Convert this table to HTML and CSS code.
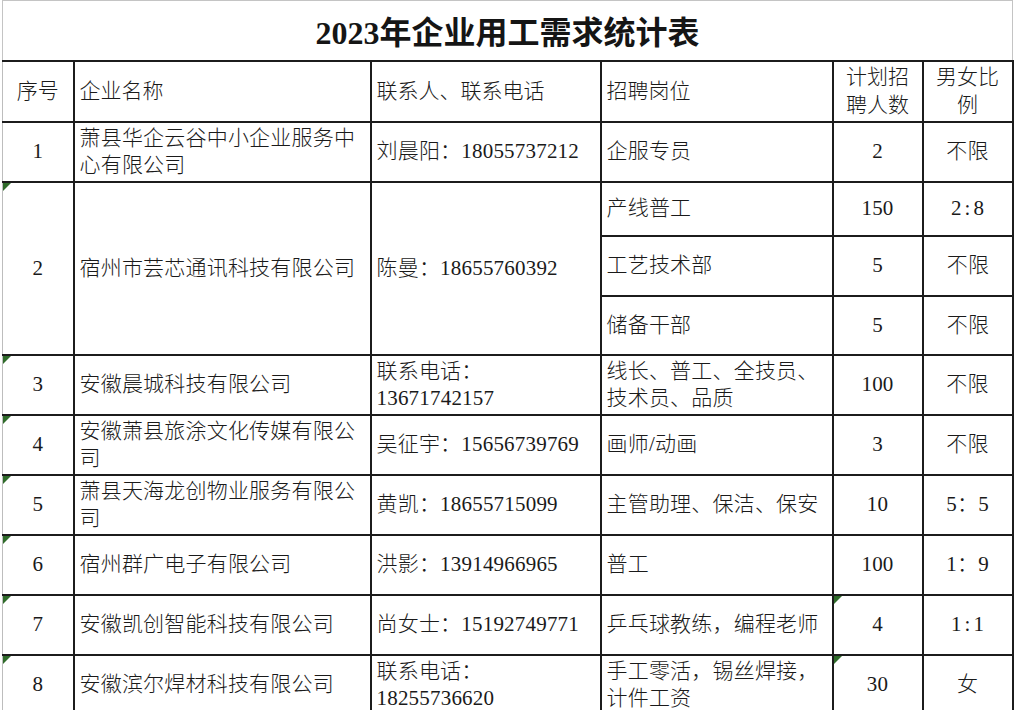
FILE: index.html
```html
<!DOCTYPE html>
<html lang="zh-CN">
<head>
<meta charset="utf-8">
<title>2023年企业用工需求统计表</title>
<link rel="stylesheet" href="styles.css">
</head>
<body>
<table class="sheet">
  <colgroup>
    <col class="c-no">
    <col class="c-name">
    <col class="c-contact">
    <col class="c-job">
    <col class="c-num">
    <col class="c-ratio">
  </colgroup>
  <thead>
    <tr class="r-title"><th colspan="6" class="title">2023年企业用工需求统计表</th></tr>
    <tr class="r-head">
      <th class="center">序号</th>
      <th class="left">企业名称</th>
      <th class="left">联系人、联系电话</th>
      <th class="left">招聘岗位</th>
      <th class="center narrow">计划招聘人数</th>
      <th class="center narrow">男女比例</th>
    </tr>
  </thead>
  <tbody>
    <tr class="r-std">
      <td class="center">1</td>
      <td class="left">萧县华企云谷中小企业服务中心有限公司</td>
      <td class="left">刘晨阳：18055737212</td>
      <td class="left">企服专员</td>
      <td class="center">2</td>
      <td class="center">不限</td>
    </tr>
    <tr class="r-a">
      <td class="center mark" rowspan="3">2</td>
      <td class="left" rowspan="3">宿州市芸芯通讯科技有限公司</td>
      <td class="left" rowspan="3">陈曼：18655760392</td>
      <td class="left">产线普工</td>
      <td class="center">150</td>
      <td class="center ratio">2:8</td>
    </tr>
    <tr class="r-b">
      <td class="left">工艺技术部</td>
      <td class="center">5</td>
      <td class="center">不限</td>
    </tr>
    <tr class="r-c">
      <td class="left">储备干部</td>
      <td class="center">5</td>
      <td class="center">不限</td>
    </tr>
    <tr class="r-std">
      <td class="center mark">3</td>
      <td class="left">安徽晨城科技有限公司</td>
      <td class="left">联系电话：<br>13671742157</td>
      <td class="left">线长、普工、全技员、技术员、品质</td>
      <td class="center">100</td>
      <td class="center">不限</td>
    </tr>
    <tr class="r-std">
      <td class="center mark">4</td>
      <td class="left">安徽萧县旅涂文化传媒有限公司</td>
      <td class="left">吴征宇：15656739769</td>
      <td class="left">画师/动画</td>
      <td class="center">3</td>
      <td class="center">不限</td>
    </tr>
    <tr class="r-std">
      <td class="center mark">5</td>
      <td class="left">萧县天海龙创物业服务有限公司</td>
      <td class="left">黄凯：18655715099</td>
      <td class="left">主管助理、保洁、保安</td>
      <td class="center">10</td>
      <td class="center">5：5</td>
    </tr>
    <tr class="r-std">
      <td class="center mark">6</td>
      <td class="left">宿州群广电子有限公司</td>
      <td class="left">洪影：13914966965</td>
      <td class="left">普工</td>
      <td class="center">100</td>
      <td class="center">1：9</td>
    </tr>
    <tr class="r-std">
      <td class="center mark">7</td>
      <td class="left">安徽凯创智能科技有限公司</td>
      <td class="left">尚女士：15192749771</td>
      <td class="left">乒乓球教练，编程老师</td>
      <td class="center mark">4</td>
      <td class="center ratio">1:1</td>
    </tr>
    <tr class="r-std">
      <td class="center mark">8</td>
      <td class="left">安徽滨尔焊材科技有限公司</td>
      <td class="left">联系电话：<br>18255736620</td>
      <td class="left">手工零活，锡丝焊接，计件工资</td>
      <td class="center mark">30</td>
      <td class="center">女</td>
    </tr>
  </tbody>
</table>
</body>
</html>
```

FILE: styles.css
```css
html, body {
  margin: 0;
  padding: 0;
  background: #ffffff;
  overflow: hidden;
}

body {
  padding-left: 2px;
  font-family: "Liberation Serif", "Noto Sans CJK SC", serif;
  color: #1a1a1a;
}

.sheet {
  border-collapse: collapse;
  table-layout: fixed;
  width: 1010px;
  font-size: 21px;
  line-height: 27px;
  font-weight: 300;
}

.c-no { width: 71px; }
.c-name { width: 297px; }
.c-contact { width: 230px; }
.c-job { width: 232px; }
.c-num { width: 90px; }
.c-ratio { width: 90px; }

.sheet th,
.sheet td {
  border: 2px solid #1c1c1c;
  vertical-align: middle;
  font-weight: 300;
  padding: 0 3px 0 5px;
  position: relative;
  word-break: break-all;
}

.sheet td {
  letter-spacing: 0.2px;
}

.sheet tr > :first-child {
  border-left: 1px solid #bdbdbd;
}

.sheet th.title {
  border-top: 1px solid #c4c4c4;
  border-left: 1px solid #c4c4c4;
  border-right: 1px solid #c4c4c4;
  border-bottom: 2px solid #1c1c1c;
  font-size: 32px;
  line-height: 40px;
  font-weight: 700;
  text-align: center;
  color: #151515;
  padding: 6px 0 0 0;
}

.r-title { height: 60px; }
.r-head { height: 61px; }
.r-std { height: 60px; }
.r-a { height: 54px; }
.r-b { height: 60px; }
.r-c { height: 59px; }

.left { text-align: left; }
.center { text-align: center; }

.sheet td.center,
.sheet th.center {
  padding-left: 3px;
  padding-right: 3px;
}

.sheet td.ratio {
  letter-spacing: 3px;
  text-indent: 3px;
}

.sheet th.narrow {
  padding: 0 12px;
  line-height: 28px;
}

.sheet td.left:first-child + td + td {
  padding-left: 4px;
}

.mark::before {
  content: "";
  position: absolute;
  left: 0;
  top: 0;
  width: 0;
  height: 0;
  border-top: 8px solid #2f6b2a;
  border-right: 8px solid transparent;
}
```
